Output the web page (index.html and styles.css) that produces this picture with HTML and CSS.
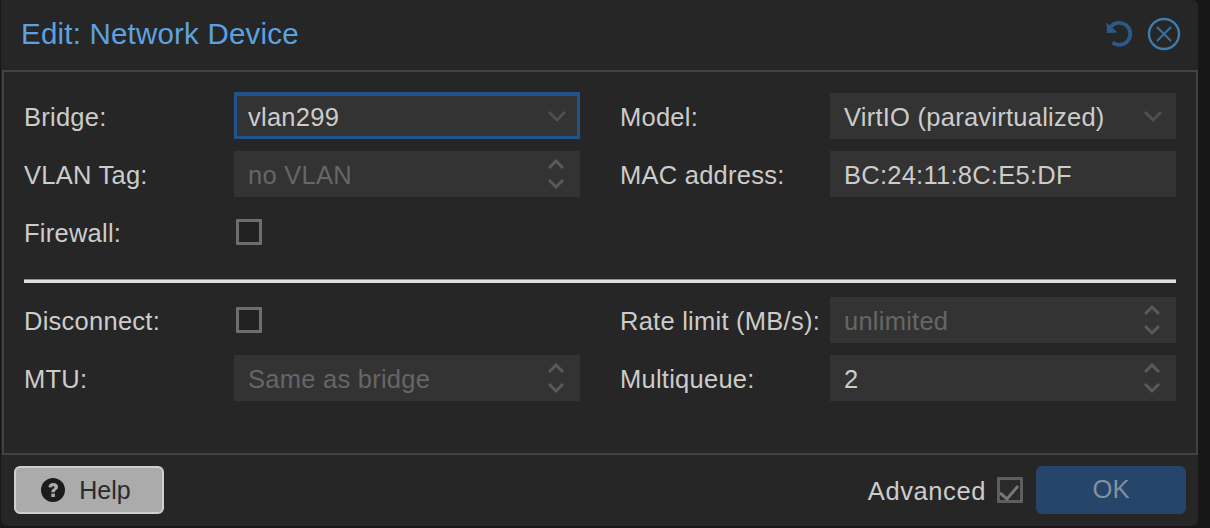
FILE: index.html
```html
<!DOCTYPE html>
<html lang="en">
<head>
<meta charset="utf-8">
<title>Edit: Network Device</title>
<link rel="stylesheet" href="styles.css">
</head>
<body>
<div class="dialog">
  <header class="titlebar">
    <h1 class="title">Edit: Network Device</h1>
    <div class="tools">
      <svg class="tool" width="30" height="30" viewBox="0 0 30 30"><path d="M6.5 8.2 A11 11 0 1 1 8.5 23.5" fill="none" stroke="#2c5a88" stroke-width="3.8"/><path d="M2.5 3.5 L3 14 L13.5 13.5 Z" fill="#2c5a88"/></svg>
      <svg class="tool" width="34" height="34" viewBox="0 0 34 34"><circle cx="17" cy="17" r="15" fill="none" stroke="#3f7cae" stroke-width="2.4"/><path d="M10 10 L24 24 M24 10 L10 24" stroke="#33709f" stroke-width="2.2"/></svg>
    </div>
  </header>
  <main class="panel">
    <section class="grid">
      <div class="col">
        <div class="row"><label class="label">Bridge:</label><div class="field focus"><span>vlan299</span><svg class="chev" width="18" height="12" viewBox="0 0 18 12"><path d="M1 2 L9 10 L17 2" fill="none" stroke="#505050" stroke-width="2.8"/></svg></div></div>
        <div class="row"><label class="label">VLAN Tag:</label><div class="field"><span class="dim">no VLAN</span><svg class="spin" width="18" height="32" viewBox="0 0 18 32"><path d="M1 10 L8 3 L15 10 M1 22 L8 29 L15 22" fill="none" stroke="#5a5a5a" stroke-width="3"/></svg></div></div>
        <div class="row"><label class="label">Firewall:</label><span class="check"></span></div>
      </div>
      <div class="col">
        <div class="row"><label class="label">Model:</label><div class="field"><span>VirtIO (paravirtualized)</span><svg class="chev" width="18" height="12" viewBox="0 0 18 12"><path d="M1 2 L9 10 L17 2" fill="none" stroke="#505050" stroke-width="2.8"/></svg></div></div>
        <div class="row"><label class="label">MAC address:</label><div class="field"><span>BC:24:11:8C:E5:DF</span></div></div>
      </div>
    </section>
    <hr class="rule">
    <section class="grid">
      <div class="col">
        <div class="row"><label class="label">Disconnect:</label><span class="check"></span></div>
        <div class="row"><label class="label">MTU:</label><div class="field"><span class="dim">Same as bridge</span><svg class="spin" width="18" height="32" viewBox="0 0 18 32"><path d="M1 10 L8 3 L15 10 M1 22 L8 29 L15 22" fill="none" stroke="#5a5a5a" stroke-width="3"/></svg></div></div>
      </div>
      <div class="col">
        <div class="row"><label class="label">Rate limit (MB/s):</label><div class="field"><span class="dim">unlimited</span><svg class="spin" width="18" height="32" viewBox="0 0 18 32"><path d="M1 10 L8 3 L15 10 M1 22 L8 29 L15 22" fill="none" stroke="#5a5a5a" stroke-width="3"/></svg></div></div>
        <div class="row"><label class="label">Multiqueue:</label><div class="field"><span>2</span><svg class="spin" width="18" height="32" viewBox="0 0 18 32"><path d="M1 10 L8 3 L15 10 M1 22 L8 29 L15 22" fill="none" stroke="#5a5a5a" stroke-width="3"/></svg></div></div>
      </div>
    </section>
  </main>
  <footer class="footer">
    <button class="btn help"><svg width="24" height="24" viewBox="0 0 24 24"><circle cx="12" cy="12" r="12" fill="#1c1c1c"/><path d="M7.4 9.2 C7.6 6.6 9.6 5 12.2 5 C15 5 17 6.6 17 9 C17 11.8 13.9 11.8 13.9 14.2 L10.3 14.2 C10.3 10.8 13.4 10.8 13.4 9.2 C13.4 8.5 12.8 8.2 12.1 8.2 C11.3 8.2 10.8 8.8 10.7 9.6 Z" fill="#ababab"/><rect x="10.3" y="15.6" width="3.6" height="3.4" fill="#ababab"/></svg><span class="btn-text">Help</span></button>
    <div class="adv"><span class="adv-text">Advanced</span><span class="check small"><svg width="26" height="26" viewBox="0 0 26 26"><path d="M3 16 L10 22 L21 9" fill="none" stroke="#777777" stroke-width="3"/></svg></span></div>
    <button class="btn ok">OK</button>
  </footer>
</div>
</body>
</html>
```
FILE: styles.css
```css
* { box-sizing: border-box; }
html, body { margin: 0; height: 100%; }
body {
  background: #171717;
  font-family: "Liberation Sans", Arial, sans-serif;
  font-size: 25.5px;
  letter-spacing: 0.25px;
  color: #cccccc;
  overflow: hidden;
}
.dialog {
  margin-left: 1px;
  width: 1197px;
  height: 526px;
  background: #262626;
  border-radius: 0 6px 6px 6px;
  display: flex;
  flex-direction: column;
}
.titlebar {
  height: 70px;
  display: flex;
  align-items: center;
  justify-content: space-between;
  padding: 0 17px 3px 20px;
}
.title {
  margin: 0;
  font-size: 29.5px;
  letter-spacing: 0.2px;
  font-weight: 400;
  color: #5ca2e0;
}
.tools { display: flex; align-items: center; gap: 13px; }
.tool { display: block; }
.panel {
  height: 385px;
  margin-left: 1px;
  border: 2px solid #424242;
  padding: 21px 20px 0 20px;
}
.grid { display: grid; grid-template-columns: 556px 556px; column-gap: 40px; }
.col { display: flex; flex-direction: column; gap: 12px; }
.row { display: flex; align-items: center; height: 46px; }
.label { width: 210px; flex: none; padding-top: 2px; }
.field {
  flex: 1;
  height: 46px;
  background: #333333;
  display: flex;
  align-items: center;
  justify-content: space-between;
  padding: 0 14px;
}
.field > span { padding-top: 2px; }
.field.focus { border: 3px solid #22548c; padding: 0 11px; box-shadow: 0 -1px 0 #22548c; }
.dim { color: #666666; }
.chev, .spin { display: block; flex: none; }
.check {
  display: block;
  width: 26px;
  height: 26px;
  margin-left: 2px;
  background: #222222;
  border: 3px solid #6e6e6e;
  border-radius: 1px;
}
.rule {
  margin: 24px 0 14px;
  height: 4px;
  border: 0;
  border-top: 1px solid #8f8f8f;
  background: #dfdfdf;
}
.footer {
  flex: 1;
  display: flex;
  align-items: center;
  padding: 0 12px 2px 13px;
}
.btn {
  width: 150px;
  height: 48px;
  border-radius: 6px;
  font-family: inherit;
  font-size: 25.5px;
  letter-spacing: 0;
  display: flex;
  align-items: center;
  justify-content: center;
  padding: 0;
}
.help { background: #ababab; border: 2px solid #cfcfcf; color: #2a2a2a; padding-right: 6px; gap: 14px; }
.btn-text { font-size: 25px; padding-top: 2px; }
.ok { background: #26456a; border: 0; color: #83919f; }
.adv { margin-left: auto; margin-right: 13px; display: flex; align-items: center; gap: 11px; }
.adv-text { letter-spacing: 0.6px; padding-top: 3px; }
.check.small { margin: 0; position: relative; background: #2a2a2a; border-color: #5e5e5e; }
.check.small svg { position: absolute; left: -3px; top: -3px; }
```
